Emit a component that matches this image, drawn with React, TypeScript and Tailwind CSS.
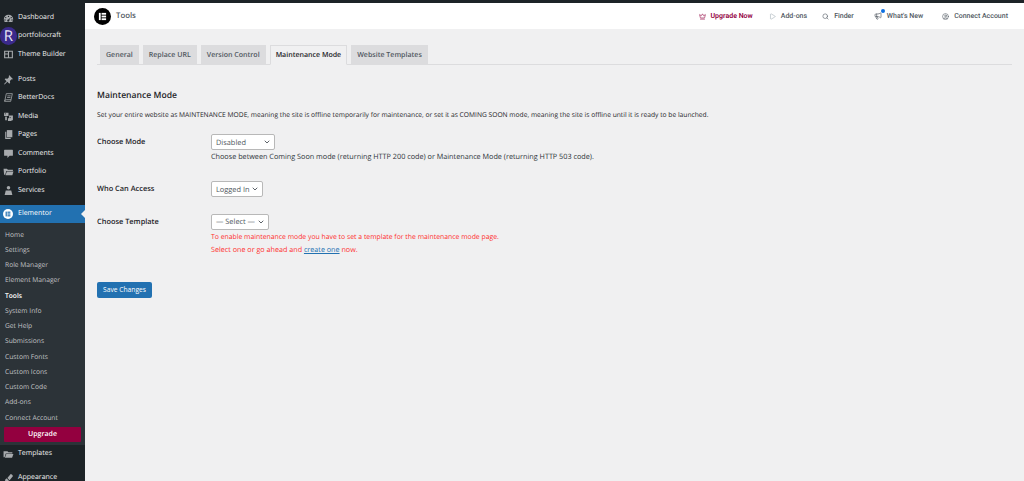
import React from 'react';
import { Crown, Search, Megaphone, Play, CircleUser, ChevronDown } from 'lucide-react';

const font = "font-['Open_Sans',sans-serif]";

// wp admin menu icons, 20x20 grid
const Glyph = ({ children }: { children: React.ReactNode }) => (
  <svg viewBox="0 0 20 20" className="h-[11px] w-[11px]" fill="currentColor">
    {children}
  </svg>
);

const icons = {
  dashboard: (
    <Glyph>
      <path fillRule="evenodd" d="M10 3a8.5 8.5 0 0 0-8.5 8.5c0 1.9.6 3.6 1.6 5h13.8a8.5 8.5 0 0 0 1.6-5A8.5 8.5 0 0 0 10 3zm0 2a1.2 1.2 0 1 1 0 2.4A1.2 1.2 0 0 1 10 5zM5 7.2a1.2 1.2 0 1 1 0 2.4 1.2 1.2 0 0 1 0-2.4zm10 0a1.2 1.2 0 1 1 0 2.4 1.2 1.2 0 0 1 0-2.4zM14 8l-2.6 4.6a2 2 0 1 1-1.7-1L14 8zM3.6 11.5a1.2 1.2 0 1 1 0 2.4 1.2 1.2 0 0 1 0-2.4zm12.8 0a1.2 1.2 0 1 1 0 2.4 1.2 1.2 0 0 1 0-2.4z" />
    </Glyph>
  ),
  theme: (
    <Glyph>
      <path fillRule="evenodd" d="M2 3h16v14H2V3zm2 2v3h5V5H4zm7 0v10h5V5h-5zM4 10v5h5v-5H4z" />
    </Glyph>
  ),
  posts: (
    <Glyph>
      <path d="M11 2l7 7-1.5 1-1-.5-3 3 .5 3.5-1.5 1.5-3.5-3.5L3 19l-1-1 4.500-5L3 9.500 4.500 8l3.500.5 3-3-.5-1L11 2z" />
    </Glyph>
  ),
  docs: (
    <Glyph>
      <path fill="none" stroke="currentColor" strokeWidth="1.4" d="M6 3h11l-3 14H3L6 3zM3 17c0-2 1-3 3-3h8.600M8 7h6M7.500 10h6" />
    </Glyph>
  ),
  media: (
    <Glyph>
      <path d="M2 3h8v6H7l-1.500 1.500L4 9H2V3zm1.500 1.500v1.500h2V4.500h-2z" />
      <path d="M11 8h7v9h-2l-1 1H9v-5h2V8zm2 3a1 1 0 1 0 0 2 1 1 0 0 0 0-2z" />
      <path d="M4 11h3v6H4z" />
    </Glyph>
  ),
  pages: (
    <Glyph>
      <path d="M7 2h10v13H7V2z" />
      <path d="M4 5h2v11h8v2H4V5z" />
    </Glyph>
  ),
  comments: (
    <Glyph>
      <path d="M3 3h14a1 1 0 0 1 1 1v9a1 1 0 0 1-1 1h-5l-4 4v-4H3a1 1 0 0 1-1-1V4a1 1 0 0 1 1-1z" />
    </Glyph>
  ),
  portfolio: (
    <Glyph>
      <path d="M1 5h6l2 2h9v2H6L4 16H2L1 5z" />
      <path d="M7 10h12l-2 7H4.500L7 10z" />
    </Glyph>
  ),
  services: (
    <Glyph>
      <circle cx="10" cy="5" r="3.200" />
      <path d="M5 10h10l2 8H3l2-8z" />
    </Glyph>
  ),
  templates: (
    <Glyph>
      <path d="M1 4h7l2 2h7v2H5L3 15H1V4z" />
      <path d="M6 9h13l-2.500 7H3.500L6 9z" />
    </Glyph>
  ),
  appearance: (
    <Glyph>
      <path d="M14 2c1.500 0 4 2.500 4 4l-6 7-4-4 6-7z" />
      <path d="M7 10l3.500 3.500C10 17 6 18.500 2 18c2-1.500 1.500-3.500 2-5.500.5-1.500 1.500-2.500 3-2.500z" />
    </Glyph>
  ),
};

const topItems = [
  { label: 'Dashboard', icon: icons.dashboard, h: 'h-[18px]' },
  { label: 'portfoliocraft', icon: null, h: 'h-[18px]' },
  { label: 'Theme Builder', icon: icons.theme, h: 'h-[19px]' },
];

const midItems = [
  { label: 'Posts', icon: icons.posts },
  { label: 'BetterDocs', icon: icons.docs },
  { label: 'Media', icon: icons.media },
  { label: 'Pages', icon: icons.pages },
  { label: 'Comments', icon: icons.comments },
  { label: 'Portfolio', icon: icons.portfolio },
  { label: 'Services', icon: icons.services },
];

const subItems = [
  'Home', 'Settings', 'Role Manager', 'Element Manager', 'Tools', 'System Info', 'Get Help',
  'Submissions', 'Custom Fonts', 'Custom Icons', 'Custom Code', 'Add-ons', 'Connect Account',
];

const tabs = ['General', 'Replace URL', 'Version Control', 'Maintenance Mode', 'Website Templates'];

const MenuRow = ({ label, icon, h = 'h-[18.5px]' }: { label: string; icon: React.ReactNode; h?: string }) => (
  <div className={`flex shrink-0 items-center ${h} text-[7px] text-[#f0f0f1]`}>
    <span className="flex w-[18px] shrink-0 justify-center pr-[2px] text-[#a7aaad]">{icon}</span>
    <span className="pt-[1px]">{label}</span>
  </div>
);

const Sidebar = () => (
  <aside className="relative flex h-[481px] w-[85px] shrink-0 flex-col overflow-hidden bg-[#1d2327] pt-[9px]">
    {topItems.map((item) => (
      <MenuRow key={item.label} label={item.label} icon={item.icon} h={item.h} />
    ))}
    <div className="absolute left-0 top-[27px] flex h-[18px] w-[17px] items-center justify-center rounded-full bg-[#3b2a8c] text-[15px] text-[#e8e6f5]">
      R
    </div>
    <div className="mt-[6px] flex shrink-0 flex-col">
      {midItems.map((item) => (
        <MenuRow key={item.label} label={item.label} icon={item.icon} />
      ))}
    </div>
    <div className="relative mt-[5.5px] flex h-[18px] shrink-0 items-center bg-[#2271b1] text-[7px] text-white">
      <span className="flex w-[18px] justify-center pr-[2px]">
        <span className="flex h-[10px] w-[10px] items-center justify-center rounded-full bg-white">
          <svg viewBox="0 0 10 10" className="h-[6px] w-[6px] text-[#2271b1]" fill="currentColor">
            <rect x="1" y="1" width="2" height="8" />
            <rect x="4" y="1" width="5" height="2" />
            <rect x="4" y="4" width="5" height="2" />
            <rect x="4" y="7" width="5" height="2" />
          </svg>
        </span>
      </span>
      <span className="pt-[1px]">Elementor</span>
      <span className="absolute right-0 top-[5px] h-0 w-0 border-y-[4px] border-r-[4px] border-y-transparent border-r-[#f0f0f1]" />
    </div>
    <div className="flex h-[222px] shrink-0 flex-col bg-[#2c3338] pt-[4px]">
      {subItems.map((label) => (
        <div
          key={label}
          className={`flex h-[15.25px] shrink-0 items-center pl-[5px] text-[6.7px] ${label === 'Tools' ? 'font-semibold text-white' : 'text-[#c3c4c7]'}`}
        >
          {label}
        </div>
      ))}
      <div className="mx-[4px] mt-[2px] flex h-[15px] shrink-0 items-center justify-center rounded-[1px] bg-[#93003f] pt-[1px] text-[7px] font-semibold text-white">
        Upgrade
      </div>
    </div>
    <MenuRow label="Templates" icon={icons.templates} h="h-[18px]" />
    <div className="mt-[6px] shrink-0">
      <MenuRow label="Appearance" icon={icons.appearance} h="h-[18px]" />
    </div>
  </aside>
);

const TopLink = ({ icon, label, className }: { icon: React.ReactNode; label: string; className: string }) => (
  <div className={`flex items-center gap-[5px] ${className}`}>
    {icon}
    <span>{label}</span>
  </div>
);

const Header = () => (
  <header className="flex h-[26px] shrink-0 items-center justify-between bg-white pl-[9px] pr-[16px]">
    <div className="flex items-center gap-[5px]">
      <span className="flex h-[17px] w-[17px] items-center justify-center rounded-full bg-black">
        <svg viewBox="0 0 10 10" className="h-[9px] w-[9px] text-white" fill="currentColor">
          <rect x="1" y="1" width="2" height="8" />
          <rect x="4" y="1" width="5" height="2" />
          <rect x="4" y="4" width="5" height="2" />
          <rect x="4" y="7" width="5" height="2" />
        </svg>
      </span>
      <span className="pt-[1px] text-[7.8px] font-semibold text-[#515962]">Tools</span>
    </div>
    <div className="flex items-center font-['Roboto',sans-serif] text-[7px] font-medium text-[#515962]">
      <TopLink className="font-semibold text-[#93003f]" icon={<Crown size={7} />} label="Upgrade Now" />
      <TopLink className="ml-[16px]" icon={<Play size={7} className="text-[#a4afb7]" />} label="Add-ons" />
      <TopLink className="ml-[15px]" icon={<Search size={7} />} label="Finder" />
      <div className="relative ml-[20px]">
        <TopLink className="" icon={<Megaphone size={8} />} label="What's New" />
        <span className="absolute left-[7px] top-[-2px] h-[4px] w-[4px] rounded-full bg-[#0c6ee0]" />
      </div>
      <TopLink className="ml-[19px]" icon={<CircleUser size={7} />} label="Connect Account" />
    </div>
  </header>
);

const Select = ({ value, width }: { value: string; width: string }) => (
  <div className={`flex h-[16px] ${width} items-center justify-between whitespace-nowrap rounded-[2px] border border-[#b8b8b8] bg-white pl-[4px] pr-[3px] text-[7.4px] leading-[14px] text-[#50575e]`}>
    <span className="pt-[1px]">{value}</span>
    <ChevronDown size={8} strokeWidth={2.5} className="text-[#3c434a]" />
  </div>
);

const Field = ({ label, className, children }: { label: string; className?: string; children: React.ReactNode }) => (
  <div className={`flex ${className ?? ''}`}>
    <div className="w-[114px] shrink-0 pt-[1px] text-[7.4px] font-semibold leading-[15px] text-[#1d2327]">{label}</div>
    <div>{children}</div>
  </div>
);

export default function App() {
  return (
    <div className={`flex h-[481px] w-[1024px] overflow-hidden bg-[#f0f0f1] [text-rendering:geometricPrecision] ${font}`}>
      <Sidebar />
      <main className="flex min-w-0 flex-1 flex-col">
        <div className="h-[3px] shrink-0 bg-[#1d2327]" />
        <Header />
        <div className="pl-[12px] pr-[12px]">
          <div className="mt-[16px] flex h-[20px] items-end gap-[4px] border-b border-[#dcdcde] pl-[3px]">
            {tabs.map((tab) => (
              <div
                key={tab}
                className={`flex items-center border border-[#dcdcde] px-[5px] pt-[1px] text-[7.05px] font-semibold ${
                  tab === 'Maintenance Mode'
                    ? 'mb-[-1px] h-[20px] border-b-[#f0f0f1] bg-[#f0f0f1] text-[#1d2327]'
                    : 'h-[19px] bg-[#dcdcde] text-[#50575e]'
                }`}
              >
                {tab}
              </div>
            ))}
          </div>
          <h2 className="mt-[23px] text-[8.6px] font-semibold leading-[14px] text-[#1d2327]">Maintenance Mode</h2>
          <p className="mt-[6.5px] text-[6.7px] leading-[11px] text-[#1d2327]">
            Set your entire website as MAINTENANCE MODE, meaning the site is offline temporarily for maintenance, or set it as COMING SOON mode, meaning the site is offline until it is ready to be launched.
          </p>
          <Field label="Choose Mode" className="mt-[14.5px]">
            <Select value="Disabled" width="w-[64px]" />
            <p className="mt-[2px] text-[7.25px] leading-[11px] text-[#2c3338]">
              Choose between Coming Soon mode (returning HTTP 200 code) or Maintenance Mode (returning HTTP 503 code).
            </p>
          </Field>
          <Field label="Who Can Access" className="mt-[18px]">
            <Select value="Logged In" width="w-[52px]" />
          </Field>
          <Field label="Choose Template" className="mt-[16.5px]">
            <Select value="— Select —" width="w-[58px]" />
            <p className="mt-[2.5px] text-[6.87px] leading-[12px] text-[#ff2d2d]">
              To enable maintenance mode you have to set a template for the maintenance mode page.
            </p>
            <p className="text-[7.2px] leading-[12px] text-[#ff2d2d]">
              Select one or go ahead and <a className="text-[#2271b1] underline">create one</a> now.
            </p>
          </Field>
          <button className="mt-[26px] flex h-[16px] w-[55px] items-center justify-center rounded-[2px] bg-[#2271b1] pt-[1px] text-[6.7px] text-white">
            Save Changes
          </button>
        </div>
      </main>
    </div>
  );
}
